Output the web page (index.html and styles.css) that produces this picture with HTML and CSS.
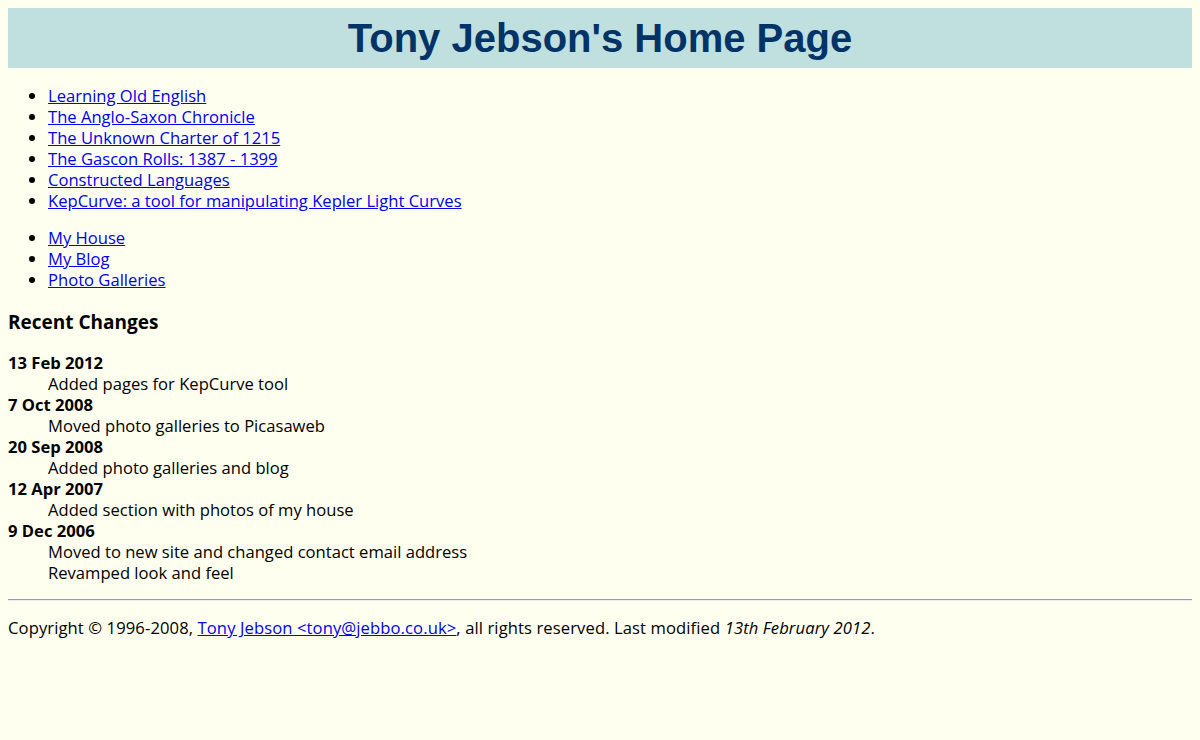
FILE: index.html
```html
<!DOCTYPE html>
<html>
<head>
<meta charset="utf-8">
<title>Tony Jebson's Home Page</title>
<link rel="stylesheet" href="styles.css">
</head>
<body>
<h1 class="banner">Tony Jebson's Home Page</h1>
<ul class="links first">
<li><a href="#">Learning Old English</a></li>
<li><a href="#">The Anglo-Saxon Chronicle</a></li>
<li><a href="#">The Unknown Charter of 1215</a></li>
<li><a href="#">The Gascon Rolls: 1387 - 1399</a></li>
<li><a href="#">Constructed Languages</a></li>
<li><a href="#">KepCurve: a tool for manipulating Kepler Light Curves</a></li>
</ul>
<ul class="links">
<li><a href="#">My House</a></li>
<li><a href="#">My Blog</a></li>
<li><a href="#">Photo Galleries</a></li>
</ul>
<h3 class="section">Recent Changes</h3>
<dl class="changes">
<dt>13 Feb 2012</dt>
<dd>Added pages for KepCurve tool</dd>
<dt>7 Oct 2008</dt>
<dd>Moved photo galleries to Picasaweb</dd>
<dt>20 Sep 2008</dt>
<dd>Added photo galleries and blog</dd>
<dt>12 Apr 2007</dt>
<dd>Added section with photos of my house</dd>
<dt>9 Dec 2006</dt>
<dd>Moved to new site and changed contact email address</dd>
<dd>Revamped look and feel</dd>
</dl>
<hr class="rule">
<p class="footer">Copyright &copy; 1996-2008, <a href="#">Tony Jebson &lt;tony@jebbo.co.uk&gt;</a>, all rights reserved. Last modified <em>13th February 2012</em>.</p>
</body>
</html>
```
FILE: styles.css
```css
html { background: #ffffef; }
body {
  margin: 8px;
  background: #ffffef;
  color: #000;
  font-family: "Open Sans", "Noto Sans", sans-serif;
  font-size: 16.6px;
  line-height: 21px;
}
a { color: #0000ee; }
.banner {
  margin: 0;
  height: 60px;
  line-height: 60px;
  background: #c0e0e0;
  color: #003366;
  text-align: center;
  font-family: "Liberation Sans", Arial, sans-serif;
  font-weight: bold;
  font-size: 40px;
}
.links {
  margin: 16px 0;
  padding-left: 40px;
}
.links.first { margin-top: 17px; }
.section {
  margin: 19px 0 16px;
  font-size: 19px;
  line-height: 26px;
  font-weight: bold;
}
.changes { margin: 17px 0 16px; }
.changes dt { font-weight: bold; }
.changes dd { margin-left: 40px; }
.rule {
  margin: 15px 0 0;
  border: none;
  border-top: 1px solid #9a9a9a;
  border-bottom: 1px solid #eeeeee;
  height: 0;
}
.footer { margin: 16px 0; letter-spacing: 0.1px; }
```
